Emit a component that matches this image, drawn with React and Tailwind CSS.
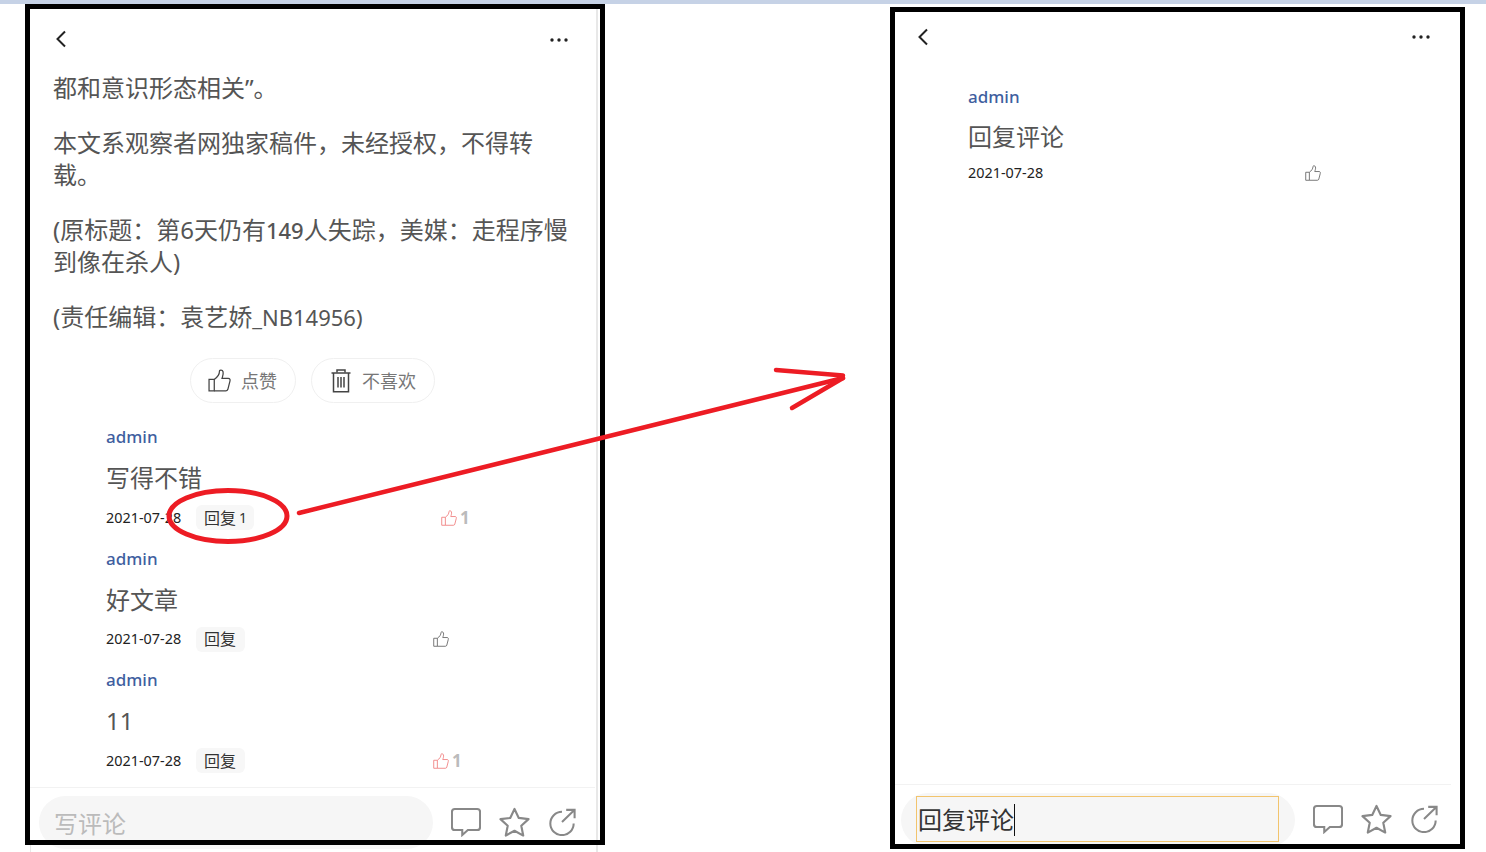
import React from 'react';

const font = { fontFamily: '"Noto Sans", "Noto Sans CJK SC", sans-serif' };

function Back() {
  return (
    <svg width="12" height="18" viewBox="0 0 12 18" fill="none" stroke="#222" strokeWidth="2">
      <path d="M10 1.5 L2.5 9 L10 16.5" />
    </svg>
  );
}

function Dots() {
  return (
    <svg width="20" height="4" viewBox="0 0 20 4" fill="#222">
      <circle cx="3" cy="2" r="1.7" />
      <circle cx="10" cy="2" r="1.7" />
      <circle cx="17" cy="2" r="1.7" />
    </svg>
  );
}

function Thumb({ size = 16, color = '#666', width = 1.2 }) {
  return (
    <svg width={size} height={size} viewBox="0 0 22 22" fill="none" stroke={color} strokeWidth={width}>
      <path d="M1 10 H6 V21 H1 Z" />
      <path d="M6 10 C9 8 11 5 11 2 C11 0.8 13.8 0.6 14.4 2.6 C15 5 14 7 13.4 9 H19.4 C21 9 21.4 10.4 21 11.6 L19 19.4 C18.6 20.6 18 21 17 21 H6" />
    </svg>
  );
}

function Trash() {
  return (
    <svg width="20" height="24" viewBox="0 0 20 24" fill="none" stroke="#444" strokeWidth="1.5">
      <path d="M0.5 4 H19.5" />
      <path d="M6 3.5 V1 H14 V3.5" />
      <path d="M2.5 4 V22.8 H17.5 V4" />
      <path d="M7 8 V18.5 M10 8 V18.5 M13 8 V18.5" />
    </svg>
  );
}

function BarIcons() {
  return (
    <div className="flex items-center gap-[18px]">
      <svg width="30" height="30" viewBox="0 0 32 30" fill="none" stroke="#888" strokeWidth="2.2" preserveAspectRatio="none">
        <path d="M4 2 H28 C30 2 31 3 31 5 V20 C31 22 30 23 28 23 H18 L12 28 V23 H4 C2 23 1 22 1 20 V5 C1 3 2 2 4 2 Z" />
      </svg>
      <svg width="31" height="30" viewBox="0 0 32 30" fill="none" stroke="#888" strokeWidth="2.2" strokeLinejoin="round">
        <path d="M16 1.5 L20.4 10.8 L30.5 12 L23 18.8 L25 29 L16 24 L7 29 L9 18.8 L1.5 12 L11.6 10.8 Z" />
      </svg>
      <svg width="28" height="28" viewBox="0 0 30 30" fill="none" stroke="#888" strokeWidth="2.2">
        <path d="M15 4 A12.5 12.5 0 1 0 27.5 16.5" />
        <path d="M15 15 L28 2.5 M19.5 2 H28.5 V11" />
      </svg>
    </div>
  );
}

function Comment({ text, replies, likes, liked, gap = 'ml-[188px]' }) {
  return (
    <div className="mb-[16.5px]">
      <div className="text-[17px] leading-6 font-medium text-[#3f5f9f]">admin</div>
      <div className="mt-[13px] text-2xl leading-8 text-[#555]">{text}</div>
      <div className="mt-[11px] flex h-[25px] items-center">
        <span className="w-[75px] whitespace-nowrap text-[14.4px] text-[#222]">2021-07-28</span>
        <span className="ml-[15px] flex h-[25px] items-center rounded-md bg-[#f7f7f7] pr-[9px] pl-[8px] text-base text-[#333]">
          回复
          {replies && <span className="ml-[3px] -mr-[2px] text-sm">{replies}</span>}
        </span>
        <span className={`${gap} flex items-center gap-[3px]`}>
          <Thumb color={liked ? '#f08080' : '#666'} />
          {likes && <span className="text-[17px] leading-none font-bold text-[#bbb]">{likes}</span>}
        </span>
      </div>
    </div>
  );
}

function LeftPanel() {
  return (
    <div className="relative h-[841px] w-[580px] shrink-0">
      <div className="absolute top-[5px] -bottom-[7px] right-[7px] w-[2px] bg-[#e8e8e8]" />
      <div className="absolute top-[841px] left-[5px] h-[7px] w-px bg-[#e8e8e8]" />
      <div className="pt-[5px] pl-[5px]">
        <div className="flex h-[60px] items-center justify-between pr-[36px] pl-[25px]">
          <Back />
          <span className="mt-[2px]">
            <Dots />
          </span>
        </div>
        <div className="mt-[3px] pl-[23px] text-2xl leading-8 text-[#555]">
          <p className="w-[522px]">都和意识形态相关”。</p>
          <p className="mt-[23px] w-[522px]">{'本文系观察者网独家稿件\uFF0C未经授权\uFF0C不得转载。'}</p>
          <p className="mt-[23px] w-[522px]">
            {'(原标题\uFF1A第6天仍有'}
            <span className="text-[22px] font-medium">149</span>
            {'人失踪\uFF0C美媒\uFF1A走程序慢到像在杀人)'}
          </p>
          <p className="mt-[23px] w-[522px]">
            {'(责任编辑\uFF1A袁艺娇'}
            <span className="text-[22px]">_NB14956)</span>
          </p>
        </div>
        <div className="mt-[25px] flex gap-[15px] pl-[160px]">
          <div className="flex h-[45px] w-[106px] items-center rounded-full border border-[#f0f0f0] pl-[17px]">
            <Thumb size={23} color="#444" />
            <span className="ml-[10px] text-lg text-[#777]">点赞</span>
          </div>
          <div className="flex h-[45px] w-[124px] items-center rounded-full border border-[#f0f0f0] pl-[19px]">
            <Trash />
            <span className="ml-[11px] text-lg text-[#777]">不喜欢</span>
          </div>
        </div>
        <div className="mt-[22px] pl-[76px]">
          <Comment text="写得不错" replies="1" likes="1" liked gap="ml-[187px]" />
          <Comment text="好文章" />
          <Comment text="11" likes="1" liked />
        </div>
        <div className="-mt-[3px] w-[565px] border-t border-[#f2f2f2] pt-[8px] pl-[9px]">
          <div className="flex items-start">
            <div className="flex h-[53px] w-[394px] items-center rounded-full bg-[#f6f6f6] pt-[3px] pl-[15px] text-2xl text-[#bbb]">写评论</div>
            <div className="mt-[11px] ml-[18px]">
              <BarIcons />
            </div>
          </div>
        </div>
      </div>
      <div className="pointer-events-none absolute inset-0 border-[5px] border-black" />
    </div>
  );
}

function RightPanel() {
  return (
    <div className="relative mt-[3px] ml-[285px] h-[842px] w-[575px] shrink-0">
      <div className="pt-[5px] pl-[5px]">
        <div className="flex h-[50px] w-[558px] items-center justify-between px-[22px]">
          <Back />
          <Dots />
        </div>
        <div className="mt-[23px] pl-[73px]">
          <div className="text-[17px] leading-6 font-medium text-[#3f5f9f]">admin</div>
          <div className="mt-[12px] text-2xl leading-8 text-[#555]">回复评论</div>
          <div className="mt-[7px] flex h-[25px] items-center">
            <span className="w-[75px] whitespace-nowrap text-[14.4px] text-[#222]">2021-07-28</span>
            <span className="ml-[262px]">
              <Thumb />
            </span>
          </div>
        </div>
        <div className="mt-[599px] w-[556px] border-t border-[#f2f2f2] pt-[8px] pl-[6px]">
          <div className="flex items-start">
            <div className="h-[54px] w-[394px] rounded-full bg-[#f6f6f6] pt-[3px] pl-[15px]">
              <div className="flex h-[46px] w-[363px] items-center border border-[#f2c46d] pt-[1px] pl-[1px] text-2xl text-[#333]">
                <span className="border-r border-[#111] leading-8">回复评论</span>
              </div>
            </div>
            <div className="mt-[11px] ml-[18px]">
              <BarIcons />
            </div>
          </div>
        </div>
      </div>
      <div className="pointer-events-none absolute inset-0 border-[5px] border-black" />
    </div>
  );
}

export default function App() {
  return (
    <div className="relative h-[852px] w-[1486px] overflow-hidden bg-white" style={font}>
      <div className="h-1 bg-[#c6d2e6]" />
      <div className="flex pl-[25px]">
        <LeftPanel />
        <RightPanel />
      </div>
      {/* hand-drawn annotation over the two screens */}
      <svg className="pointer-events-none absolute top-0 left-0" width="1486" height="852" viewBox="0 0 1486 852" fill="none" stroke="#ed1c24" strokeWidth="4.5" strokeLinecap="round">
        <ellipse cx="228" cy="516" rx="59" ry="25.5" strokeWidth="5" />
        <path d="M299 513 L843 378" />
        <path d="M776 370 L843 375.5 M792 408 L843 378" />
      </svg>
    </div>
  );
}
